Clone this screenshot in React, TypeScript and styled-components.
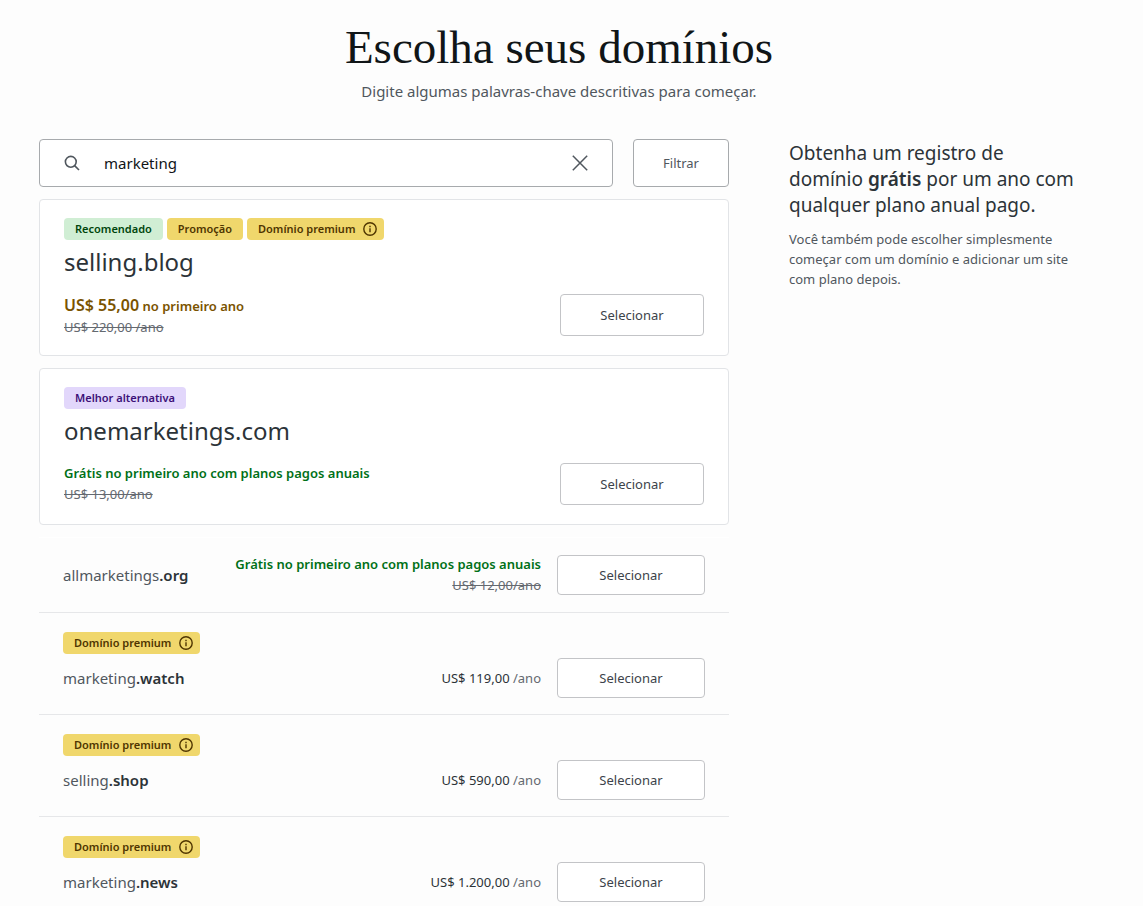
import React, { useState } from "react";
import styled, { createGlobalStyle } from "styled-components";

const GlobalStyle = createGlobalStyle`
  *, *::before, *::after { box-sizing: border-box; }
  body {
    margin: 0;
    background: #fdfdfd;
    color: #2c3338;
    font-family: "Segoe UI", "Noto Sans", sans-serif;
    font-size: 14px;
    line-height: 20px;
  }
  h1, h2, h3, p, ul { margin: 0; padding: 0; }
  button, input { font: inherit; }
`;

const Page = styled.div`
  max-width: 1143px;
  padding: 19px 64px 0 39px;
`;

const Header = styled.header`
  text-align: center;
`;

const Title = styled.h1`
  color: #101517;
  font-family: Recoleta, "Liberation Serif", serif;
  font-size: 47px;
  font-weight: 400;
  line-height: 56px;
`;

const Subtitle = styled.p`
  margin-top: 4px;
  color: #50575e;
  font-size: 15px;
  line-height: 24px;
`;

const Columns = styled.div`
  display: flex;
  align-items: flex-start;
  gap: 60px;
  margin-top: 36px;
`;

const Main = styled.main`
  flex: 1;
  min-width: 0;
`;

const SearchForm = styled.form`
  display: flex;
  gap: 20px;
  height: 48px;
`;

const SearchField = styled.div`
  display: flex;
  flex: 1;
  align-items: center;
  padding: 0 24px;
  border: 1px solid #a7aaad;
  border-radius: 4px;
  background: #fff;
`;

const SearchInput = styled.input`
  flex: 1;
  min-width: 0;
  margin-left: 24px;
  padding: 0;
  border: 0;
  outline: 0;
  background: transparent;
  color: #101517;
  font-size: 15px;
`;

const ClearButton = styled.button`
  display: flex;
  padding: 0;
  border: 0;
  background: transparent;
  color: #50575e;
  cursor: pointer;
`;

const FilterButton = styled.button`
  width: 96px;
  border: 1px solid #a7aaad;
  border-radius: 4px;
  background: #fff;
  color: #50575e;
  font-size: 13px;
  cursor: pointer;
`;

const Card = styled.article`
  margin-top: 12px;
  padding: 18px 24px 17px;
  border: 1px solid #e2e4e7;
  border-radius: 4px;
  background: #fff;
`;

const Badges = styled.div`
  display: flex;
  flex-wrap: wrap;
  gap: 4px;
`;

const tones = {
  green: { background: "#d0eed4", color: "#00450c" },
  yellow: { background: "#f0d76c", color: "#4f3500" },
  purple: { background: "#e2d7fb", color: "#3c1078" },
};
type Tone = keyof typeof tones;

const BadgeBox = styled.span<{ $tone: Tone }>`
  display: inline-flex;
  align-items: center;
  gap: 7px;
  height: 22px;
  padding: 0 11px;
  border-radius: 4px;
  background: ${(p) => tones[p.$tone].background};
  color: ${(p) => tones[p.$tone].color};
  font-size: 11px;
  font-weight: 600;
`;

const PremiumBox = styled(BadgeBox)`
  padding-right: 6px;
`;

const CardDomain = styled.h2`
  color: #2c3338;
  font-size: 24px;
  font-weight: 400;
  line-height: 43px;
`;

const CardFooter = styled.div`
  display: flex;
  align-items: flex-start;
  justify-content: space-between;
  min-height: 44px;
  margin-top: 11px;
`;

const Sale = styled.p`
  color: #7a5300;
  font-size: 13px;
  font-weight: 600;
  line-height: 22px;
`;

const SaleAmount = styled.strong`
  font-size: 16px;
  font-weight: 600;
`;

const Free = styled.p`
  color: #007017;
  font-size: 13px;
  font-weight: 600;
  line-height: 21px;
`;

const OldPrice = styled.p`
  color: #646970;
  font-size: 13px;
  line-height: 21px;
  text-decoration: line-through;
`;

const SelectButton = styled.button<{ $compact?: boolean }>`
  flex: none;
  width: ${(p) => (p.$compact ? 148 : 144)}px;
  height: ${(p) => (p.$compact ? 40 : 42)}px;
  border: 1px solid #c3c4c7;
  border-radius: 4px;
  background: #fff;
  color: #3c434a;
  font-size: 13px;
  cursor: pointer;
`;

const List = styled.ul`
  margin-top: 12px;
  border-top: 1px solid #fff;
  list-style: none;
`;

const Row = styled.li`
  padding: 16px 24px;
  border-bottom: 1px solid #e6e7e9;
`;

const RowBadges = styled(Badges)`
  margin: 3px 0 4px;
`;

const RowLine = styled.div`
  display: flex;
  align-items: center;
  gap: 16px;
`;

const RowDomain = styled.h3`
  flex: 1;
  color: #50575e;
  font-size: 15px;
  font-weight: 400;
`;

const Extension = styled.span`
  color: #2c3338;
  font-weight: 600;
`;

const RowPrice = styled.div`
  color: #2c3338;
  font-size: 13px;
  text-align: right;
`;

const Period = styled.span`
  color: #646970;
`;

const Aside = styled.aside`
  width: 290px;
  padding-top: 1px;
`;

const Promo = styled.p`
  color: #2c3338;
  font-size: 19px;
  line-height: 26px;

  strong { font-weight: 600; }
`;

const PromoNote = styled.p`
  margin-top: 11px;
  color: #50575e;
  font-size: 13px;
  line-height: 20px;
`;

const SearchIcon = () => (
  <svg width="16" height="16" viewBox="0 0 16 16" fill="none" stroke="#50575e" strokeWidth="1.6" aria-hidden="true">
    <circle cx="6.8" cy="6.8" r="5.4" />
    <path d="M10.6 10.6 15 15" />
  </svg>
);

const CloseIcon = () => (
  <svg width="16" height="16" viewBox="0 0 16 16" fill="none" stroke="currentColor" strokeWidth="1.5" aria-hidden="true">
    <path d="M.8.8 15.2 15.2M15.2.8.8 15.2" />
  </svg>
);

const InfoIcon = () => (
  <svg width="16" height="16" viewBox="0 0 16 16" fill="none" stroke="currentColor" strokeWidth="1.4" aria-hidden="true">
    <circle cx="8" cy="8" r="6.2" />
    <path d="M8 7.2V11.2M8 4.8V6.2" />
  </svg>
);

const PremiumBadge = () => (
  <PremiumBox $tone="yellow">
    Domínio premium
    <InfoIcon />
  </PremiumBox>
);

const rows = [
  { name: "allmarketings", ext: ".org", oldPrice: "US$ 12,00/ano" },
  { name: "marketing", ext: ".watch", price: "US$ 119,00" },
  { name: "selling", ext: ".shop", price: "US$ 590,00" },
  { name: "marketing", ext: ".news", price: "US$ 1.200,00" },
];

export default function App() {
  const [query, setQuery] = useState("marketing");

  return (
    <>
      <GlobalStyle />
      <Page>
        <Header>
          <Title>Escolha seus domínios</Title>
          <Subtitle>Digite algumas palavras-chave descritivas para começar.</Subtitle>
        </Header>
        <Columns>
          <Main>
            <SearchForm role="search" onSubmit={(e) => e.preventDefault()}>
              <SearchField>
                <SearchIcon />
                <SearchInput
                  type="text"
                  aria-label="Buscar domínio"
                  value={query}
                  onChange={(e) => setQuery(e.target.value)}
                />
                <ClearButton type="button" aria-label="Limpar busca" onClick={() => setQuery("")}>
                  <CloseIcon />
                </ClearButton>
              </SearchField>
              <FilterButton type="button">Filtrar</FilterButton>
            </SearchForm>

            <Card>
              <Badges>
                <BadgeBox $tone="green">Recomendado</BadgeBox>
                <BadgeBox $tone="yellow">Promoção</BadgeBox>
                <PremiumBadge />
              </Badges>
              <CardDomain>selling.blog</CardDomain>
              <CardFooter>
                <div>
                  <Sale>
                    <SaleAmount>US$ 55,00</SaleAmount> no primeiro ano
                  </Sale>
                  <OldPrice>US$ 220,00 /ano</OldPrice>
                </div>
                <SelectButton type="button">Selecionar</SelectButton>
              </CardFooter>
            </Card>

            <Card>
              <Badges>
                <BadgeBox $tone="purple">Melhor alternativa</BadgeBox>
              </Badges>
              <CardDomain>onemarketings.com</CardDomain>
              <CardFooter>
                <div>
                  <Free>Grátis no primeiro ano com planos pagos anuais</Free>
                  <OldPrice>US$ 13,00/ano</OldPrice>
                </div>
                <SelectButton type="button">Selecionar</SelectButton>
              </CardFooter>
            </Card>

            <List>
              {rows.map((row) => (
                <Row key={row.name + row.ext}>
                  {row.price && (
                    <RowBadges>
                      <PremiumBadge />
                    </RowBadges>
                  )}
                  <RowLine>
                    <RowDomain>
                      {row.name}
                      <Extension>{row.ext}</Extension>
                    </RowDomain>
                    <RowPrice>
                      {row.price ? (
                        <>
                          {row.price} <Period>/ano</Period>
                        </>
                      ) : (
                        <>
                          <Free>Grátis no primeiro ano com planos pagos anuais</Free>
                          <OldPrice>{row.oldPrice}</OldPrice>
                        </>
                      )}
                    </RowPrice>
                    <SelectButton type="button" $compact>
                      Selecionar
                    </SelectButton>
                  </RowLine>
                </Row>
              ))}
            </List>
          </Main>

          <Aside>
            <Promo>
              Obtenha um registro de domínio <strong>grátis</strong> por um ano com qualquer plano anual pago.
            </Promo>
            <PromoNote>
              Você também pode escolher simplesmente começar com um domínio e adicionar um site com plano depois.
            </PromoNote>
          </Aside>
        </Columns>
      </Page>
    </>
  );
}
